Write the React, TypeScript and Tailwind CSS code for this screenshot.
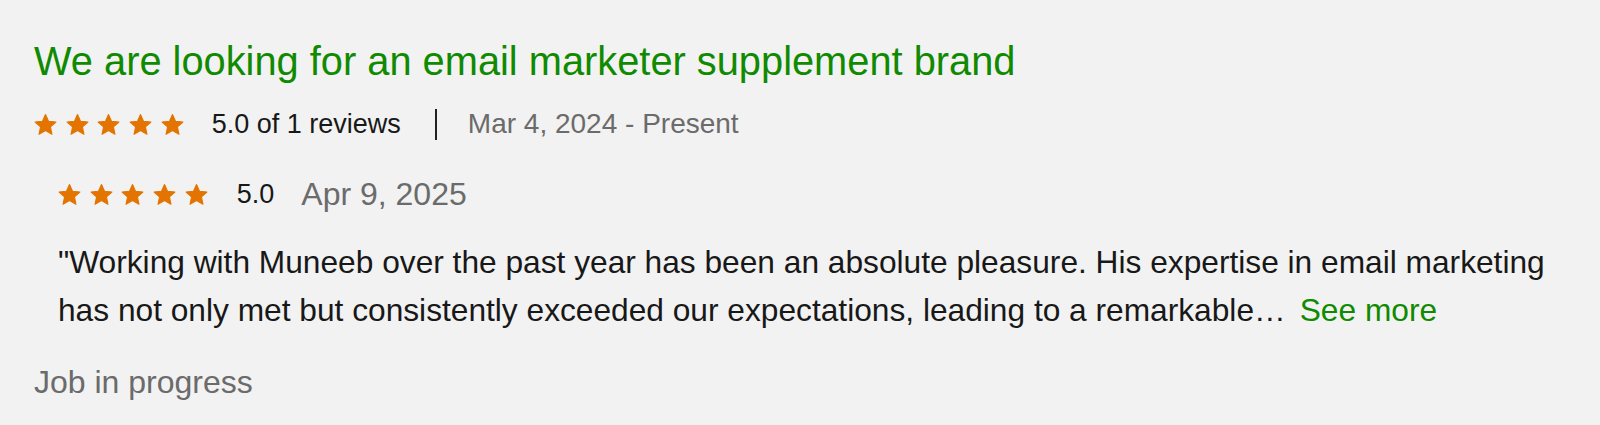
import React from 'react';

const font = { fontFamily: '"Liberation Sans", Arial, Helvetica, sans-serif' };

function Star() {
  return (
    <svg viewBox="-0.6 -0.4 25.2 24" className="w-[23px] h-[23px] shrink-0" aria-hidden="true">
      <polygon
        points="12,0.6 15.3,8 23.4,8.9 17.4,14.3 19.1,22.3 12,18.2 4.9,22.3 6.6,14.3 0.6,8.9 8.7,8"
        fill="#e37400"
        stroke="#e37400"
        strokeWidth="1.2"
        strokeLinejoin="round"
      />
    </svg>
  );
}

function Stars() {
  return (
    <div className="flex items-center gap-[8.7px]">
      {[0, 1, 2, 3, 4].map((i) => (
        <Star key={i} />
      ))}
    </div>
  );
}

export default function App() {
  return (
    <div className="min-h-[425px] w-full bg-[#f2f2f2] pl-[34px] pt-[37px]" style={font}>
      {/* Job title */}
      <h2 className="text-[39.8px] leading-[48px] text-[#108a00] font-normal">
        We are looking for an email marketer supplement brand
      </h2>

      {/* Job rating + dates */}
      <div className="mt-[23px] flex items-center h-[32px]">
        <Stars />
        <span className="ml-[28px] text-[27px] leading-[32px] text-[#181818]">5.0 of 1 reviews</span>
        <span className="ml-[34px] w-[2px] h-[31px] bg-[#222]" />
        <span className="ml-[31px] text-[28px] leading-[32px] text-[#6b6b6b]">Mar 4, 2024 - Present</span>
      </div>

      {/* Feedback */}
      <div className="pl-[24px]">
        <div className="mt-[36px] flex items-center h-[36px]">
          <Stars />
          <span className="ml-[29px] text-[27px] leading-[36px] text-[#181818]">5.0</span>
          <span className="ml-[27px] text-[32px] leading-[36px] text-[#6b6b6b]">Apr 9, 2025</span>
        </div>

        <div className="mt-[26px] text-[31.7px] leading-[48px] text-[#181818] whitespace-nowrap">
          <div>
            "Working with Muneeb over the past year has been an absolute pleasure. His expertise in email marketing
          </div>
          <div className="flex">
            <span>has not only met but consistently exceeded our expectations, leading to a remarkable…</span>
            <a href="#" className="ml-[14px] text-[#108a00]">
              See more
            </a>
          </div>
        </div>
      </div>

      <div className="mt-[24px] text-[32px] leading-[48px] text-[#6b6b6b]">Job in progress</div>
    </div>
  );
}
